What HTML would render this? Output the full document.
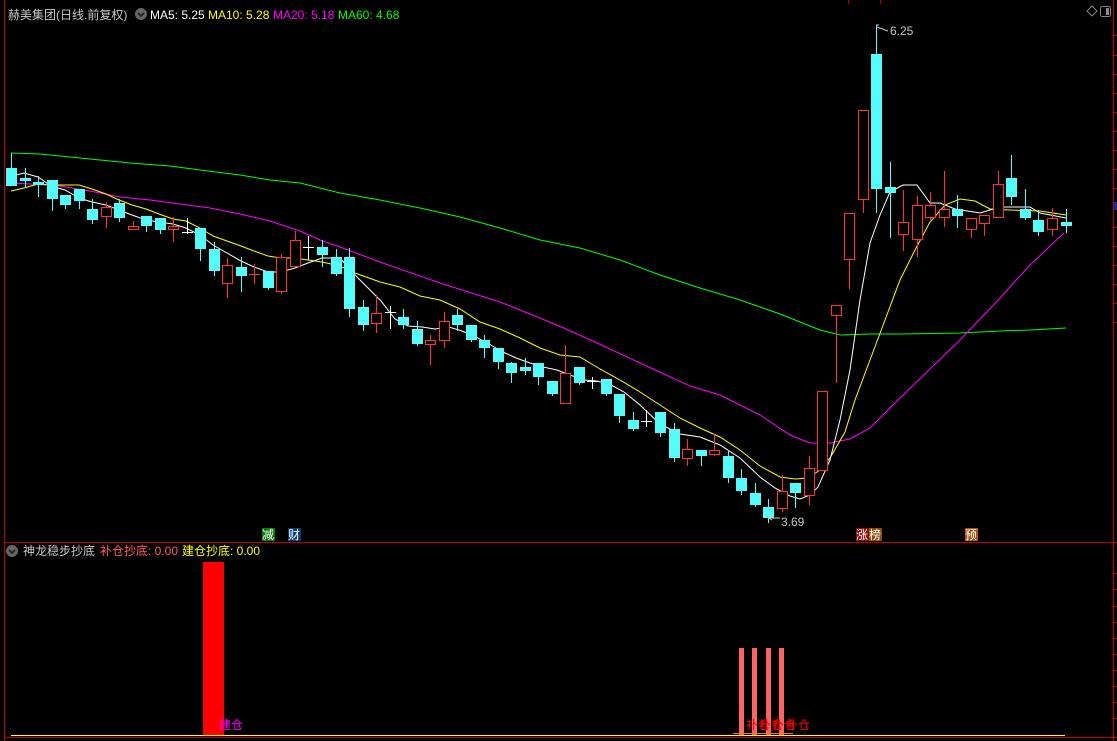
<!DOCTYPE html>
<html><head><meta charset="utf-8"><style>
html,body{margin:0;padding:0;background:#000;width:1117px;height:741px;overflow:hidden}
svg{display:block}
text{font-family:"Liberation Sans","Noto Sans CJK SC",sans-serif;font-size:12px}
</style></head><body>
<svg width="1117" height="741" viewBox="0 0 1117 741" xmlns="http://www.w3.org/2000/svg" shape-rendering="crispEdges">
<rect width="1117" height="741" fill="#000"/>
<line x1="4.5" y1="0" x2="4.5" y2="741" stroke="#C00000"/>
<line x1="1113.5" y1="0" x2="1113.5" y2="741" stroke="#C00000"/>
<line x1="4" y1="542.5" x2="1117" y2="542.5" stroke="#C00000"/>
<line x1="4" y1="737.5" x2="1117" y2="737.5" stroke="#C00000"/>
<g stroke="#C00000">
<line x1="848.5" y1="0" x2="848.5" y2="4"/><line x1="880.5" y1="0" x2="880.5" y2="4"/>
<line x1="1113" y1="35.5" x2="1117" y2="35.5"/><line x1="1113" y1="55.5" x2="1117" y2="55.5"/><line x1="1113" y1="74.5" x2="1117" y2="74.5"/><line x1="1113" y1="93.5" x2="1117" y2="93.5"/><line x1="1113" y1="112.5" x2="1117" y2="112.5"/><line x1="1113" y1="131.5" x2="1117" y2="131.5"/><line x1="1113" y1="150.5" x2="1117" y2="150.5"/><line x1="1113" y1="169.5" x2="1117" y2="169.5"/><line x1="1113" y1="188.5" x2="1117" y2="188.5"/><line x1="1113" y1="227.5" x2="1117" y2="227.5"/><line x1="1113" y1="246.5" x2="1117" y2="246.5"/><line x1="1113" y1="265.5" x2="1117" y2="265.5"/><line x1="1113" y1="284.5" x2="1117" y2="284.5"/><line x1="1113" y1="303.5" x2="1117" y2="303.5"/><line x1="1113" y1="322.5" x2="1117" y2="322.5"/>
<line x1="1113" y1="573.5" x2="1117" y2="573.5"/><line x1="1113" y1="589.5" x2="1117" y2="589.5"/><line x1="1113" y1="606.5" x2="1117" y2="606.5"/><line x1="1113" y1="622.5" x2="1117" y2="622.5"/><line x1="1113" y1="638.5" x2="1117" y2="638.5"/><line x1="1113" y1="654.5" x2="1117" y2="654.5"/><line x1="1113" y1="670.5" x2="1117" y2="670.5"/><line x1="1113" y1="686.5" x2="1117" y2="686.5"/><line x1="1113" y1="702.5" x2="1117" y2="702.5"/><line x1="1113" y1="718.5" x2="1117" y2="718.5"/>
</g>
<rect x="1114" y="202" width="3" height="8" fill="#1a2a9a"/>
<text x="8" y="19" fill="#C8C8C8" font-size="13">赫美集团(日线.前复权)</text>
<circle cx="141" cy="14" r="6" fill="#666"/><path d="M138 13l3 3 3-3" stroke="#222" stroke-width="1.5" fill="none"/>
<text x="150" y="19" fill="#FFFFFF">MA5: 5.25</text>
<text x="208" y="19" fill="#FFFF00">MA10: 5.28</text>
<text x="273" y="19" fill="#FF00FF">MA20: 5.18</text>
<text x="338" y="19" fill="#00FF00">MA60: 4.68</text>
<path d="M1087 11l5-5 5 5-5 5z" stroke="#888" fill="none" shape-rendering="auto"/>
<rect x="1100.5" y="6.5" width="10" height="10" rx="2" stroke="#888" fill="none"/><rect x="1106" y="8" width="3" height="7" fill="#888"/>
<g fill="none" stroke-width="1" shape-rendering="auto">
<polyline stroke="#00FF00" points="11,153 40,154 70,157 100,160 130,163 170,166 200,170 240,175 270,180 300,183 340,193 380,200 420,208 460,217 500,228 540,240 580,248 620,260 660,275 700,288 740,300 780,314 800,322 820,330 840,335 870,334 900,334 960,333 1000,331 1030,330 1066,328"/>
<polyline stroke="#FF00FF" points="11,183 30,184 60,186 90,191 120,197 150,200 180,204 210,208 240,214 270,221 300,231 320,240 340,247 380,262 440,283 500,302 540,318 573,332 610,349 640,363 690,386 720,395 760,415 790,435 810,443 830,443 850,439 870,428 900,398 960,340 1000,298 1030,265 1064,233"/>
<polyline stroke="#FFFF00" points="11,191 24,188 38,184 51,185 65,185 79,185 92,189 106,194 119,200 132,205 146,209 159,214 173,219 186,221 200,228 213,236 227,241 241,246 254,251 268,256 281,258 295,258 308,260 322,262 340,266 355,273 380,282 400,287 420,296 440,300 460,309 480,322 500,329 520,338 540,348 560,355 580,357 600,369 620,380 640,392 660,405 680,418 700,428 720,437 740,450 760,466 780,477 795,479 808,478 820,470 830,458 845,432 855,400 870,360 885,320 900,280 915,250 930,222 945,205 960,199 975,201 990,209 1010,210 1040,211 1066,215"/>
<polyline stroke="#FFFFFF" points="12,176 24,173 38,177 51,186 65,190 79,198 92,202 106,205 119,210 132,215 146,220 159,222 173,224 186,228 200,235 213,245 227,253 241,261 254,267 268,272 281,272 295,268 308,263 322,258 340,258 355,275 368,288 381,301 395,319 408,326 422,327 435,329 449,327 462,331 476,337 489,344 503,352 516,358 530,363 543,367 557,370 570,375 584,380 597,381 611,385 624,392 640,405 660,424 680,434 700,437 720,445 740,458 760,477 775,488 790,496 800,499 810,495 818,487 830,460 840,420 850,370 860,300 870,243 880,215 890,192 903,185 917,185 930,203 940,203 955,209 980,213 990,210 1000,207 1030,207 1040,213 1066,218"/>
</g>
<g fill="#54FCFC" stroke="#54FCFC">
<line x1="11.5" y1="153" x2="11.5" y2="186"/><rect x="6.5" y="168.5" width="10" height="17"/>
<line x1="25.5" y1="168" x2="25.5" y2="187"/><rect x="20.5" y="178.5" width="10" height="2"/>
<line x1="38.5" y1="176" x2="38.5" y2="197"/><rect x="33.5" y="182.5" width="10" height="2"/>
<line x1="52.5" y1="180" x2="52.5" y2="211"/><rect x="47.5" y="180.5" width="10" height="18"/>
<line x1="65.5" y1="195" x2="65.5" y2="209"/><rect x="60.5" y="195.5" width="10" height="9"/>
<line x1="79.5" y1="189" x2="79.5" y2="209"/><rect x="74.5" y="189.5" width="10" height="11"/>
<line x1="92.5" y1="199" x2="92.5" y2="224"/><rect x="87.5" y="209.5" width="10" height="10"/>
<line x1="119.5" y1="199" x2="119.5" y2="222"/><rect x="114.5" y="203.5" width="10" height="14"/>
<line x1="146.5" y1="216" x2="146.5" y2="232"/><rect x="141.5" y="216.5" width="10" height="9"/>
<line x1="160.5" y1="218" x2="160.5" y2="234"/><rect x="155.5" y="218.5" width="10" height="11"/>
<line x1="200.5" y1="228" x2="200.5" y2="261"/><rect x="195.5" y="228.5" width="10" height="20"/>
<line x1="214.5" y1="242" x2="214.5" y2="276"/><rect x="209.5" y="249.5" width="10" height="21"/>
<line x1="241.5" y1="257" x2="241.5" y2="292"/><rect x="236.5" y="267.5" width="10" height="8"/>
<line x1="268.5" y1="271" x2="268.5" y2="290"/><rect x="263.5" y="271.5" width="10" height="16"/>
<line x1="322.5" y1="240" x2="322.5" y2="267"/><rect x="317.5" y="247.5" width="10" height="7"/>
<line x1="336.5" y1="249" x2="336.5" y2="276"/><rect x="331.5" y="257.5" width="10" height="16"/>
<line x1="349.5" y1="248" x2="349.5" y2="317"/><rect x="344.5" y="257.5" width="10" height="51"/>
<line x1="363.5" y1="300" x2="363.5" y2="331"/><rect x="358.5" y="307.5" width="10" height="17"/>
<line x1="403.5" y1="309" x2="403.5" y2="329"/><rect x="398.5" y="317.5" width="10" height="7"/>
<line x1="417.5" y1="321" x2="417.5" y2="346"/><rect x="412.5" y="329.5" width="10" height="14"/>
<line x1="457.5" y1="309" x2="457.5" y2="331"/><rect x="452.5" y="315.5" width="10" height="9"/>
<line x1="471.5" y1="325" x2="471.5" y2="342"/><rect x="466.5" y="325.5" width="10" height="14"/>
<line x1="484.5" y1="335" x2="484.5" y2="358"/><rect x="479.5" y="340.5" width="10" height="7"/>
<line x1="498.5" y1="348" x2="498.5" y2="369"/><rect x="493.5" y="348.5" width="10" height="13"/>
<line x1="511.5" y1="362" x2="511.5" y2="383"/><rect x="506.5" y="363.5" width="10" height="9"/>
<line x1="525.5" y1="358" x2="525.5" y2="375"/><rect x="520.5" y="367.5" width="10" height="3"/>
<line x1="538.5" y1="363" x2="538.5" y2="385"/><rect x="533.5" y="363.5" width="10" height="13"/>
<line x1="552.5" y1="381" x2="552.5" y2="396"/><rect x="547.5" y="381.5" width="10" height="12"/>
<line x1="579.5" y1="367" x2="579.5" y2="385"/><rect x="574.5" y="367.5" width="10" height="15"/>
<line x1="606.5" y1="379" x2="606.5" y2="396"/><rect x="601.5" y="379.5" width="10" height="14"/>
<line x1="619.5" y1="394" x2="619.5" y2="423"/><rect x="614.5" y="394.5" width="10" height="21"/>
<line x1="633.5" y1="412" x2="633.5" y2="431"/><rect x="628.5" y="420.5" width="10" height="8"/>
<line x1="660.5" y1="412" x2="660.5" y2="437"/><rect x="655.5" y="412.5" width="10" height="20"/>
<line x1="674.5" y1="423" x2="674.5" y2="462"/><rect x="669.5" y="429.5" width="10" height="28"/>
<line x1="701.5" y1="450" x2="701.5" y2="466"/><rect x="696.5" y="450.5" width="10" height="5"/>
<line x1="728.5" y1="450" x2="728.5" y2="483"/><rect x="723.5" y="456.5" width="10" height="21"/>
<line x1="741.5" y1="469" x2="741.5" y2="495"/><rect x="736.5" y="478.5" width="10" height="12"/>
<line x1="755.5" y1="483" x2="755.5" y2="507"/><rect x="750.5" y="493.5" width="10" height="11"/>
<line x1="768.5" y1="499" x2="768.5" y2="523"/><rect x="763.5" y="507.5" width="10" height="10"/>
<line x1="795.5" y1="483" x2="795.5" y2="508"/><rect x="790.5" y="483.5" width="10" height="9"/>
<line x1="876.5" y1="25" x2="876.5" y2="213"/><rect x="871.5" y="54.5" width="10" height="134"/>
<line x1="890.5" y1="162" x2="890.5" y2="238"/><rect x="885.5" y="187.5" width="10" height="5"/>
<line x1="957.5" y1="195" x2="957.5" y2="228"/><rect x="952.5" y="209.5" width="10" height="6"/>
<line x1="1011.5" y1="155" x2="1011.5" y2="205"/><rect x="1006.5" y="178.5" width="10" height="18"/>
<line x1="1025.5" y1="189" x2="1025.5" y2="220"/><rect x="1020.5" y="209.5" width="10" height="8"/>
<line x1="1038.5" y1="210" x2="1038.5" y2="236"/><rect x="1033.5" y="220.5" width="10" height="11"/>
<line x1="1066.5" y1="209" x2="1066.5" y2="233"/><rect x="1061.5" y="222.5" width="10" height="3"/>
</g>
<g fill="#000" stroke="#FF3232">
<line x1="106.5" y1="202" x2="106.5" y2="228"/><rect x="101.5" y="207.5" width="10" height="9"/>
<line x1="133.5" y1="221" x2="133.5" y2="229"/><rect x="128.5" y="226.5" width="10" height="3"/>
<line x1="173.5" y1="217" x2="173.5" y2="242"/><rect x="168.5" y="226.5" width="10" height="3"/>
<line x1="227.5" y1="258" x2="227.5" y2="298"/><rect x="222.5" y="265.5" width="10" height="18"/>
<line x1="254.5" y1="264" x2="254.5" y2="284"/><line x1="249" y1="274.5" x2="260" y2="274.5"/>
<line x1="281.5" y1="254" x2="281.5" y2="294"/><rect x="276.5" y="257.5" width="10" height="34"/>
<line x1="295.5" y1="231" x2="295.5" y2="266"/><rect x="290.5" y="240.5" width="10" height="26"/>
<line x1="376.5" y1="295" x2="376.5" y2="333"/><rect x="371.5" y="313.5" width="10" height="10"/>
<line x1="430.5" y1="335" x2="430.5" y2="365"/><rect x="425.5" y="340.5" width="10" height="4"/>
<line x1="444.5" y1="312" x2="444.5" y2="348"/><rect x="439.5" y="321.5" width="10" height="19"/>
<line x1="565.5" y1="345" x2="565.5" y2="403"/><rect x="560.5" y="373.5" width="10" height="30"/>
<line x1="687.5" y1="439" x2="687.5" y2="466"/><rect x="682.5" y="449.5" width="10" height="9"/>
<line x1="714.5" y1="434" x2="714.5" y2="456"/><rect x="709.5" y="450.5" width="10" height="4"/>
<line x1="782.5" y1="475" x2="782.5" y2="512"/><rect x="777.5" y="491.5" width="10" height="17"/>
<line x1="809.5" y1="456" x2="809.5" y2="505"/><rect x="804.5" y="468.5" width="10" height="27"/>
<rect x="817.5" y="391.5" width="10" height="79"/>
<line x1="836.5" y1="305" x2="836.5" y2="383"/><rect x="831.5" y="305.5" width="10" height="10"/>
<line x1="849.5" y1="213" x2="849.5" y2="289"/><rect x="844.5" y="213.5" width="10" height="46"/>
<line x1="863.5" y1="110" x2="863.5" y2="213"/><rect x="858.5" y="110.5" width="10" height="89"/>
<line x1="903.5" y1="190" x2="903.5" y2="251"/><rect x="898.5" y="222.5" width="10" height="12"/>
<line x1="917.5" y1="196" x2="917.5" y2="257"/><rect x="912.5" y="205.5" width="10" height="34"/>
<line x1="930.5" y1="192" x2="930.5" y2="220"/><rect x="925.5" y="205.5" width="10" height="12"/>
<line x1="944.5" y1="171" x2="944.5" y2="227"/><rect x="939.5" y="209.5" width="10" height="8"/>
<line x1="971.5" y1="218" x2="971.5" y2="238"/><rect x="966.5" y="218.5" width="10" height="11"/>
<line x1="984.5" y1="215" x2="984.5" y2="236"/><rect x="979.5" y="215.5" width="10" height="8"/>
<line x1="998.5" y1="171" x2="998.5" y2="217"/><rect x="993.5" y="184.5" width="10" height="33"/>
<line x1="1052.5" y1="208" x2="1052.5" y2="236"/><rect x="1047.5" y="218.5" width="10" height="11"/>
</g>
<g stroke="#FFFFFF">
<line x1="187.5" y1="218" x2="187.5" y2="234"/><line x1="182" y1="232.5" x2="193" y2="232.5"/>
<line x1="308.5" y1="236" x2="308.5" y2="260"/><line x1="303" y1="247.5" x2="314" y2="247.5"/>
<line x1="390.5" y1="306" x2="390.5" y2="329"/><line x1="385" y1="312.5" x2="396" y2="312.5"/>
<line x1="592.5" y1="377" x2="592.5" y2="389"/><line x1="587" y1="381.5" x2="598" y2="381.5"/>
<line x1="646.5" y1="410" x2="646.5" y2="427"/><line x1="641" y1="421.5" x2="652" y2="421.5"/>
</g>
<path d="M876 25h3M877 27l11 4" stroke="#C8C8C8" fill="none" shape-rendering="auto"/>
<text x="890" y="35" fill="#C8C8C8">6.25</text>
<path d="M769 518l3-2M769 518l3 2M769 518h11" stroke="#C8C8C8" fill="none" shape-rendering="auto"/>
<text x="781" y="526" fill="#C8C8C8">3.69</text>
<rect x="262" y="528" width="13" height="13" fill="#0A7A0A"/><text x="262" y="539" fill="#fff">减</text>
<rect x="288" y="528" width="13" height="13" fill="#0A3A7A"/><text x="288" y="539" fill="#fff">财</text>
<rect x="856" y="528" width="13" height="13" fill="#8A0A0A"/><text x="856" y="539" fill="#fff">涨</text>
<rect x="869" y="528" width="13" height="13" fill="#8A4A0A"/><text x="869" y="539" fill="#fff">榜</text>
<rect x="965" y="528" width="13" height="13" fill="#B0500A"/><text x="965" y="539" fill="#fff">预</text>
<circle cx="12" cy="551" r="6" fill="#666"/><path d="M9 550l3 3 3-3" stroke="#222" stroke-width="1.5" fill="none"/>
<text x="23" y="555" fill="#C8C8C8">神龙稳步抄底</text>
<text x="100" y="555" fill="#FF5A5A">补仓抄底: 0.00</text>
<text x="182" y="555" fill="#FFFF00">建仓抄底: 0.00</text>
<rect x="203" y="562" width="21" height="174" fill="#FF0000"/>
<g fill="#FF6464">
<rect x="739" y="648" width="5" height="88"/><rect x="752" y="648" width="5" height="88"/><rect x="766" y="648" width="5" height="88"/><rect x="779" y="648" width="5" height="88"/>
</g>
<line x1="733" y1="733.5" x2="793" y2="733.5" stroke="#FF6464"/>
<line x1="11" y1="735.5" x2="1065" y2="735.5" stroke="#FFFF00"/>
<text x="219" y="729" fill="#FF00FF">建仓</text>
<text x="746" y="729" fill="#FF0000">补仓</text><text x="759" y="729" fill="#FF0000">补仓</text><text x="772" y="729" fill="#FF0000">补仓</text><text x="786" y="729" fill="#FF0000">补仓</text>
</svg>
</body></html>
